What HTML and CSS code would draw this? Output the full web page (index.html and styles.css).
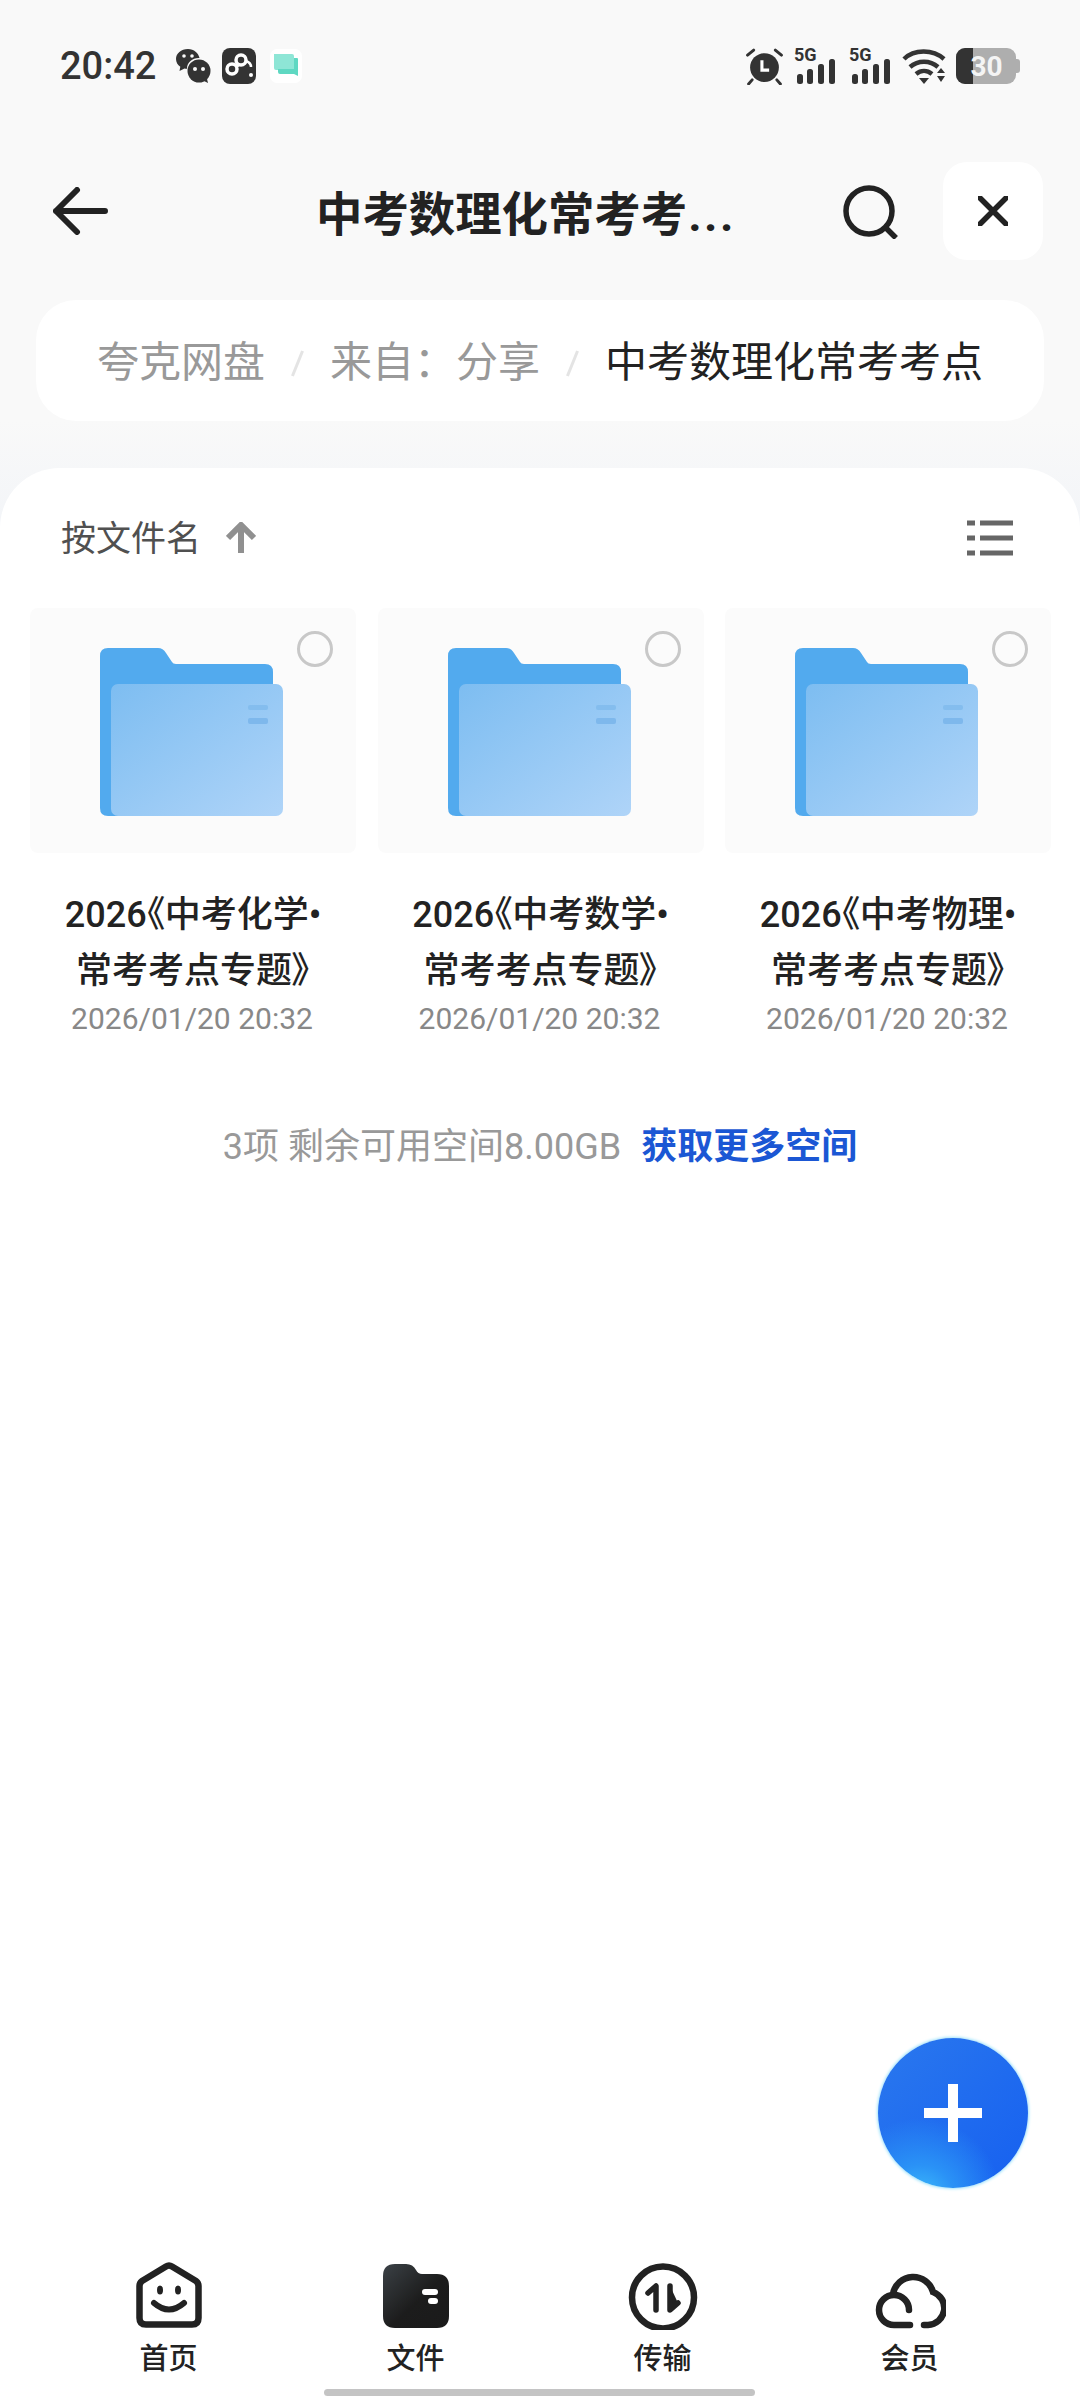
FILE: index.html
```html
<!DOCTYPE html>
<html lang="zh-CN">
<head>
<meta charset="utf-8">
<title>夸克网盘</title>
<link rel="stylesheet" href="styles.css">
</head>
<body>
<div class="page">
  <div class="status">
    <span class="time">20:42</span>
    <svg class="ic-wechat" viewBox="0 0 36 36"><path fill="#333" d="M13 1C6 1 1 5.500 1 11c0 3.200 1.700 6 4.300 7.800L4.500 23l5-2.600c.8.200 1.600.3 2.500.3 0-6.500 5.500-10.700 11.500-10.700h1C23.500 5 19 1 13 1z"/><circle cx="24" cy="23" r="11.500" fill="#333"/><path fill="#333" d="M27 32l6 3-1.500-6z"/><circle cx="9" cy="8" r="1.800" fill="#f9f9f9"/><circle cx="17" cy="8" r="1.800" fill="#f9f9f9"/><circle cx="20" cy="21" r="2" fill="#f9f9f9"/><circle cx="28" cy="21" r="2" fill="#f9f9f9"/></svg>
    <svg class="ic-app" viewBox="0 0 34 36"><rect width="34" height="36" rx="8" fill="#333"/><circle cx="10" cy="21" r="5" fill="none" stroke="#fff" stroke-width="3.500"/><circle cx="19" cy="12" r="5" fill="none" stroke="#fff" stroke-width="3.500"/><path d="M14 18l3-2" stroke="#fff" stroke-width="4"/><path d="M24 13c3 1 5 3 5 6" fill="none" stroke="#fff" stroke-width="2.500"/><circle cx="29" cy="27" r="2" fill="#fff"/></svg>
    <svg class="ic-note" viewBox="0 0 32 34"><rect width="32" height="34" rx="7" fill="#fff"/><path fill="#8ee6d6" d="M4 5h18a2 2 0 0 1 2 2v14H6a2 2 0 0 1-2-2z"/><path fill="#5fd8c2" d="M8 20h16V9h3a1 1 0 0 1 1 1v17l-4-2H10a2 2 0 0 1-2-2z"/></svg>
    <div class="status-right">
      <svg class="ic-alarm" viewBox="0 0 36 36"><circle cx="18" cy="19" r="14" fill="#333"/><path d="M15.500 12v9.500h7" fill="none" stroke="#fff" stroke-width="3"/><path d="M1.500 7l6-5M34.500 7l-6-5M6 31l-3.500 4M30 31l3.500 4" stroke="#333" stroke-width="2.800" stroke-linecap="round"/></svg>
      <div class="signal"><span class="five-g">5G</span><svg class="bars" viewBox="0 0 40 25"><rect x="1" y="15" width="6" height="10" rx="2.500" fill="#333"/><rect x="11" y="10" width="6" height="15" rx="2.500" fill="#333"/><rect x="22" y="5" width="6" height="20" rx="2.500" fill="#333"/><rect x="33" y="0" width="6" height="25" rx="2.500" fill="#333"/></svg></div>
      <div class="signal signal-last"><span class="five-g">5G</span><svg class="bars" viewBox="0 0 40 25"><rect x="1" y="15" width="6" height="10" rx="2.500" fill="#333"/><rect x="11" y="10" width="6" height="15" rx="2.500" fill="#333"/><rect x="22" y="5" width="6" height="20" rx="2.500" fill="#333"/><rect x="33" y="0" width="6" height="25" rx="2.500" fill="#333"/></svg></div>
      <svg class="ic-wifi" viewBox="0 0 46 36"><path d="M2 11C12 1 31 1 42 11M8 19c8-7 20-7 28 0M14 26c5-4 11-4 16 0" fill="none" stroke="#333" stroke-width="4.500"/><path d="M17 30h10l-5 6z" fill="#333"/><path d="M35 25l4-5 4 5zM35 28h8l-4 6z" fill="#333"/></svg>
      <div class="battery"><span class="battery-level"></span><span class="battery-num">30</span><span class="battery-nub"></span></div>
    </div>
  </div>

  <header class="header">
    <svg class="ic-back" viewBox="0 0 55 48"><path d="M52 24H3M24 3L3 24l21 21" fill="none" stroke="#222" stroke-width="6" stroke-linecap="round" stroke-linejoin="round"/></svg>
    <h1 class="title">中考数理化常考考<span class="dots">...</span></h1>
    <svg class="ic-search" viewBox="0 0 56 56"><circle cx="26" cy="28" r="23" fill="none" stroke="#222" stroke-width="5.500"/><path d="M43 45l10 10" stroke="#222" stroke-width="5.500"/></svg>
    <div class="close"><svg class="ic-close" viewBox="0 0 30 30"><path d="M2 2l26 26M28 2L2 28" stroke="#222" stroke-width="5.500" stroke-linecap="round"/></svg></div>
  </header>

  <nav class="crumbs">
    <span class="crumb">夸克网盘</span>
    <span class="slash"></span>
    <span class="crumb">来自：分享</span>
    <span class="slash"></span>
    <span class="crumb crumb-current">中考数理化常考考点</span>
  </nav>

  <main class="sheet">
    <div class="sort">
      <span class="sort-label">按文件名</span>
      <svg class="ic-up" viewBox="0 0 30 32"><path d="M15 31V4M2 16L15 3l13 13" fill="none" stroke="#909090" stroke-width="6"/></svg>
      <svg class="ic-list" viewBox="0 0 46 36"><path d="M0 3h8M13 3h33M0 18h8M13 18h33M0 33h8M13 33h33" stroke="#666" stroke-width="5"/></svg>
    </div>

    <div class="grid">
      <article class="item">
        <div class="thumb">
          <span class="radio"></span>
          <svg class="folder" viewBox="0 0 184 170">
            <defs>
              <linearGradient id="front" x1="0" y1="0" x2="1" y2="1"><stop offset="0" stop-color="#7dbdf1"/><stop offset="1" stop-color="#afd4f8"/></linearGradient>
              <symbol id="folder-art" viewBox="0 0 184 170">
                <path fill="#52aaee" d="M8 0h50q5 0 8 5l6 9q1 2 4 2h89q8 0 8 8v136q0 8-8 8H8q-8 0-8-8V8q0-8 8-8z"/>
                <rect x="11" y="36" width="172" height="132" rx="7" fill="url(#front)"/>
                <rect x="148" y="57" width="20" height="5" rx="2" fill="#84bdee"/>
                <rect x="148" y="70" width="20" height="6" rx="2" fill="#7eb8ec"/>
              </symbol>
            </defs>
            <use href="#folder-art"/>
          </svg>
        </div>
        <h2 class="name">2026<span class="open">《</span>中考化学•<br>常考考点专题<span class="shut">》</span></h2>
        <p class="date">2026/01/20 20:32</p>
      </article>
      <article class="item">
        <div class="thumb">
          <span class="radio"></span>
          <svg class="folder" viewBox="0 0 184 170"><use href="#folder-art"/></svg>
        </div>
        <h2 class="name">2026<span class="open">《</span>中考数学•<br>常考考点专题<span class="shut">》</span></h2>
        <p class="date">2026/01/20 20:32</p>
      </article>
      <article class="item">
        <div class="thumb">
          <span class="radio"></span>
          <svg class="folder" viewBox="0 0 184 170"><use href="#folder-art"/></svg>
        </div>
        <h2 class="name">2026<span class="open">《</span>中考物理•<br>常考考点专题<span class="shut">》</span></h2>
        <p class="date">2026/01/20 20:32</p>
      </article>
    </div>

    <p class="summary">3项 剩余可用空间8.00GB<a class="more">获取更多空间</a></p>

    <button class="fab"><svg class="ic-plus" viewBox="0 0 58 58"><path d="M29 0v58M0 29h58" stroke="#fff" stroke-width="10"/></svg></button>

    <footer class="tabs">
      <div class="tab">
        <svg class="tab-icon" viewBox="0 0 72 72"><path d="M33 8.500L9 23q-2.500 2-2.500 5v32q0 6.500 6.500 6.500h46q6.500 0 6.500-6.500V28q0-3-2.500-5L39 8.500q-3-2-6 0z" fill="none" stroke="#222" stroke-width="6.500" stroke-linejoin="round"/><ellipse cx="27" cy="32" rx="3" ry="4.500" fill="#222"/><ellipse cx="45" cy="32" rx="3" ry="4.500" fill="#222"/><path d="M21 45q15 13 30 0" fill="none" stroke="#222" stroke-width="6" stroke-linecap="round"/></svg>
        <span class="tab-label">首页</span>
      </div>
      <div class="tab">
        <svg class="tab-icon" viewBox="0 0 72 72"><defs><linearGradient id="file-dark" x1="0" y1="0" x2="1" y2="1"><stop offset="0" stop-color="#3b4146"/><stop offset=".55" stop-color="#1c1c1c"/><stop offset="1" stop-color="#1a1a1a"/></linearGradient></defs><path fill="url(#file-dark)" d="M15 6h11q7 0 10 6 2 4 6 4h15q12 0 12 12v30q0 12-12 12H15Q3 70 3 58V18Q3 6 15 6z"/><rect x="42" y="31" width="16" height="6" rx="3" fill="#fff"/><rect x="48" y="40" width="10" height="6" rx="3" fill="#fff"/></svg>
        <span class="tab-label">文件</span>
      </div>
      <div class="tab">
        <svg class="tab-icon" viewBox="0 0 72 72"><circle cx="36" cy="39.500" r="31" fill="none" stroke="#222" stroke-width="6.500"/><path d="M21 35l8-7v24" fill="none" stroke="#222" stroke-width="5.500" stroke-linecap="round" stroke-linejoin="round"/><path d="M43 28v24l8-7" fill="#222" stroke="#222" stroke-width="5.500" stroke-linecap="round" stroke-linejoin="round"/></svg>
        <span class="tab-label">传输</span>
      </div>
      <div class="tab">
        <svg class="tab-icon" viewBox="0 0 72 72"><path d="M36 67H20A15 15 0 1 1 35 52" fill="none" stroke="#222" stroke-width="6.500" stroke-linecap="round"/><path d="M50 67h4a17 17 0 0 0 5-33A20.500 20.500 0 0 0 19 36" fill="none" stroke="#222" stroke-width="6.500" stroke-linecap="round"/></svg>
        <span class="tab-label">会员</span>
      </div>
    </footer>
    <div class="home-bar"></div>
  </main>
</div>
</body>
</html>
```

FILE: styles.css
```css
* { box-sizing: border-box; }
html, body { margin: 0; padding: 0; }
body {
  font-family: Roboto, "Noto Sans CJK SC", sans-serif;
  color: #222;
  background: #fff;
}
.page {
  width: 1080px;
  height: 2400px;
  overflow: hidden;
  display: flex;
  flex-direction: column;
  background: linear-gradient(#f9f9f9 0, #f9f9f9 420px, #f3f5f8 520px, #f3f5f8 100%);
}

/* status bar */
.status {
  height: 132px;
  flex: none;
  display: flex;
  align-items: center;
  padding: 0 64px 0 60px;
  color: #333;
}
.time { font-size: 38px; line-height: 44px; font-weight: 500; margin-right: 19px; }
.ic-wechat { width: 36px; height: 36px; margin-right: 10px; }
.ic-app { width: 36px; height: 36px; margin-right: 13px; }
.ic-note { width: 32px; height: 34px; }
.status-right { margin-left: auto; display: flex; align-items: center; }
.ic-alarm { width: 37px; height: 37px; margin-right: 11px; }
.signal { width: 44px; height: 36px; margin-right: 11px; position: relative; }
.signal-last { margin-right: 9px; }
.five-g {
  position: absolute;
  left: 0;
  top: -3px;
  font-size: 18px;
  line-height: 20px;
  font-weight: 700;
  color: #333;
}
.bars { position: absolute; left: 1px; bottom: 0; width: 42px; height: 25px; }
.ic-wifi { width: 46px; height: 36px; margin-right: 8px; }
.battery {
  position: relative;
  width: 60px;
  height: 36px;
  border-radius: 9px;
  background: #aeaeae;
  display: flex;
  align-items: center;
  justify-content: center;
}
.battery-level {
  position: absolute;
  left: 0;
  top: 0;
  bottom: 0;
  width: 17px;
  background: #333;
  border-radius: 9px 0 0 9px;
}
.battery-num { position: relative; font-size: 28px; font-weight: 700; color: #f4f4f4; margin-left: 1px; }
.battery-nub {
  position: absolute;
  right: -4px;
  top: 11px;
  width: 4px;
  height: 14px;
  background: #aeaeae;
  border-radius: 0 3px 3px 0;
}

/* header */
.header {
  flex: none;
  height: 98px;
  margin-top: 30px;
  padding: 0 37px 0 53px;
  display: flex;
  align-items: center;
}
.ic-back { width: 55px; height: 48px; flex: none; }
.title {
  margin: 8px 0 0 208px;
  font-size: 46.4px;
  line-height: 60px;
  font-weight: 700;
  color: #222;
  white-space: nowrap;
}
.dots { letter-spacing: 2.5px; margin-left: 1px; }
.ic-search { width: 56px; height: 56px; flex: none; margin-left: auto; margin-right: 44px; }
.close {
  width: 100px;
  height: 98px;
  border-radius: 24px;
  background: #fff;
  display: flex;
  align-items: center;
  justify-content: center;
  flex: none;
}
.ic-close { width: 30px; height: 30px; }

/* breadcrumb */
.crumbs {
  flex: none;
  margin: 40px 36px 0;
  height: 121px;
  border-radius: 40px;
  background: #fff;
  padding: 5px 0 0 61px;
  display: flex;
  align-items: center;
  gap: 25px;
}
.crumb { font-size: 42px; line-height: 56px; color: #999; white-space: nowrap; }
.crumb-current { color: #222; }
.slash {
  width: 3px;
  height: 27px;
  background: #e4e4e4;
  margin: 0 6px;
  transform: rotate(22deg);
}

/* sheet */
.sheet {
  position: relative;
  flex: 1;
  margin-top: 47px;
  background: #fff;
  border-radius: 60px 60px 0 0;
  display: flex;
  flex-direction: column;
}
.sort {
  height: 140px;
  flex: none;
  padding: 0 67px 0 61px;
  display: flex;
  align-items: center;
}
.sort-label { font-size: 35px; line-height: 46px; color: #505050; padding-top: 4px; }
.ic-up { width: 30px; height: 32px; margin-left: 25px; }
.ic-list { width: 46px; height: 36px; margin-left: auto; }

.grid {
  flex: none;
  padding-left: 30px;
  display: grid;
  grid-template-columns: repeat(3, 326px);
  column-gap: 21.5px;
}
.item { display: flex; flex-direction: column; align-items: center; }
.thumb {
  position: relative;
  width: 100%;
  height: 245px;
  background: #fbfbfb;
  border-radius: 8px;
  padding: 40px 0 0 70px;
}
.folder { display: block; width: 184px; height: 170px; }
.radio {
  position: absolute;
  left: 267px;
  top: 23px;
  width: 36px;
  height: 36px;
  border-radius: 50%;
  border: 3px solid #c8c8c8;
}
.name {
  margin: 34px 0 0;
  font-size: 36px;
  line-height: 56px;
  font-weight: 500;
  color: #222;
  text-align: center;
  white-space: nowrap;
}
.open, .shut { font-feature-settings: "palt"; }
.date { margin: 0; padding-right: 2px; font-size: 30px; line-height: 40px; color: #888; }

.summary {
  margin: 84px 0 0;
  font-size: 36px;
  line-height: 48px;
  color: #999;
  text-align: center;
  white-space: nowrap;
  flex: none;
}
.more { margin-left: 20px; font-size: 36px; font-weight: 700; color: #1b57d4; }

.fab {
  position: absolute;
  left: 878px;
  top: 1570px;
  width: 150px;
  height: 150px;
  padding: 0;
  border: 0;
  border-radius: 50%;
  background: radial-gradient(circle at 28% 108%, #3fc0fb 0, #2a92f6 18%, rgba(31,110,245,0) 42%), linear-gradient(135deg, #2a78ee, #1660f0);
  box-shadow: 0 0 3px 1px #9fe3fb;
  display: flex;
  align-items: center;
  justify-content: center;
}
.ic-plus { width: 58px; height: 58px; }

.tabs {
  flex: none;
  margin-top: auto;
  padding: 0 45px;
  display: grid;
  grid-template-columns: repeat(4, 247px);
}
.tab { display: flex; flex-direction: column; align-items: center; }
.tab-icon { width: 72px; height: 72px; display: block; }
.tab-label {
  margin-top: 11px;
  font-size: 29px;
  line-height: 36px;
  font-weight: 500;
  color: #222;
}
.home-bar {
  flex: none;
  width: 431px;
  height: 7px;
  margin: 12px 0 4px 324px;
  border-radius: 4px;
  background: #c4c4c4;
}
```
